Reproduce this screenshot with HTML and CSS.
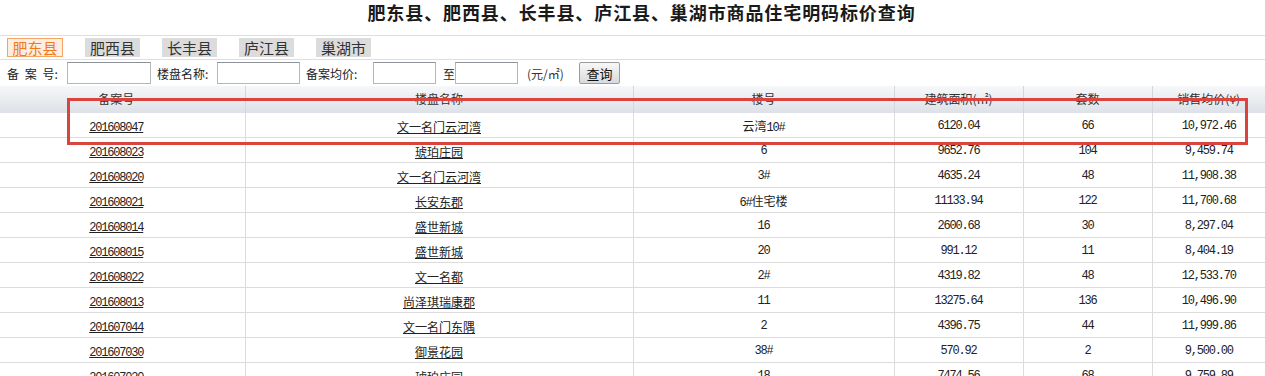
FILE: index.html
```html
<!DOCTYPE html>
<html>
  <head>
    <meta charset="UTF-8"/>
    <title>商品住宅明码标价查询</title>
    <link rel="stylesheet" href="styles.css">
  </head>
  <body>
    <div class="page">
      <h1 class="title">肥东县、肥西县、长丰县、庐江县、巢湖市商品住宅明码标价查询</h1>

      <div class="tabs">
        <a class="tab active">肥东县</a>
        <a class="tab">肥西县</a>
        <a class="tab">长丰县</a>
        <a class="tab">庐江县</a>
        <a class="tab">巢湖市</a>
      </div>

      <div class="filter">
        <span class="label l-no">备 案 号:</span>
        <input class="field f-no" type="text">
        <span class="label l-name">楼盘名称:</span>
        <input class="field f-name" type="text">
        <span class="label l-price">备案均价:</span>
        <input class="field f-price" type="text">
        <span class="label l-to">至</span>
        <input class="field f-price" type="text">
        <span class="label l-unit">(元/㎡)</span>
        <button class="btn" type="button">查询</button>
      </div>

      <table class="list">
        <colgroup>
          <col style="width: 245px">
          <col style="width: 388px">
          <col style="width: 261px">
          <col style="width: 129px">
          <col style="width: 129px">
          <col>
        </colgroup>
        <thead>
          <tr>
            <th class="first">备案号</th>
            <th>楼盘名称</th>
            <th>楼号</th>
            <th>建筑面积(㎡)</th>
            <th>套数</th>
            <th>销售均价(¥)</th>
          </tr>
        </thead>
        <tbody>
          <tr><td class="first"><a class="num">201608047</a></td><td><a>文一名门云河湾</a></td><td>云湾<span class="num">10#</span></td><td class="num">6120.04</td><td class="num">66</td><td class="num">10,972.46</td></tr>
          <tr><td class="first"><a class="num">201608023</a></td><td><a>琥珀庄园</a></td><td class="num">6</td><td class="num">9652.76</td><td class="num">104</td><td class="num">9,459.74</td></tr>
          <tr><td class="first"><a class="num">201608020</a></td><td><a>文一名门云河湾</a></td><td class="num">3#</td><td class="num">4635.24</td><td class="num">48</td><td class="num">11,908.38</td></tr>
          <tr><td class="first"><a class="num">201608021</a></td><td><a>长安东郡</a></td><td><span class="num">6#</span>住宅楼</td><td class="num">11133.94</td><td class="num">122</td><td class="num">11,700.68</td></tr>
          <tr><td class="first"><a class="num">201608014</a></td><td><a>盛世新城</a></td><td class="num">16</td><td class="num">2600.68</td><td class="num">30</td><td class="num">8,297.04</td></tr>
          <tr><td class="first"><a class="num">201608015</a></td><td><a>盛世新城</a></td><td class="num">20</td><td class="num">991.12</td><td class="num">11</td><td class="num">8,404.19</td></tr>
          <tr><td class="first"><a class="num">201608022</a></td><td><a>文一名都</a></td><td class="num">2#</td><td class="num">4319.82</td><td class="num">48</td><td class="num">12,533.70</td></tr>
          <tr><td class="first"><a class="num">201608013</a></td><td><a>尚泽琪瑞康郡</a></td><td class="num">11</td><td class="num">13275.64</td><td class="num">136</td><td class="num">10,496.90</td></tr>
          <tr><td class="first"><a class="num">201607044</a></td><td><a>文一名门东隅</a></td><td class="num">2</td><td class="num">4396.75</td><td class="num">44</td><td class="num">11,999.86</td></tr>
          <tr><td class="first"><a class="num">201607030</a></td><td><a>御景花园</a></td><td class="num">38#</td><td class="num">570.92</td><td class="num">2</td><td class="num">9,500.00</td></tr>
          <tr><td class="first"><a class="num">201607020</a></td><td><a>琥珀庄园</a></td><td class="num">18</td><td class="num">7474.56</td><td class="num">68</td><td class="num">9,759.89</td></tr>
        </tbody>
      </table>

      <div class="mark"></div>
    </div>
  </body>
</html>
```

FILE: styles.css
```css
html, body {
  margin: 0;
  padding: 0;
  overflow: hidden;
  background: #fff;
}
body {
  font-family: 'Noto Sans CJK SC', 'Liberation Sans', sans-serif;
  font-size: 12px;
  color: #222;
}

.page {
  position: relative;
}

.title {
  margin: 0;
  height: 35px;
  line-height: 24px;
  font-size: 18px;
  font-weight: bold;
  letter-spacing: 0.9px;
  text-align: center;
  color: #1a1a1a;
  padding-left: 18px;
  border-bottom: 1px solid #dedede;
}

.tabs {
  display: flex;
  gap: 22px;
  height: 24px;
  padding: 2px 0 0 7px;
  box-sizing: border-box;
  border-bottom: 1px solid #dedede;
}
.tab {
  display: block;
  width: 55px;
  height: 19px;
  line-height: 19px;
  font-size: 15px;
  text-align: center;
  color: #333;
  background: #dcdcdc;
  box-sizing: border-box;
}
.tab.active {
  width: 56px;
  color: #f07a1c;
  background: #fdeedf;
  border: 1px solid #f2a566;
  line-height: 17px;
}

.filter {
  display: flex;
  align-items: center;
  height: 26px;
  padding-left: 7px;
}
.label {
  display: block;
  white-space: nowrap;
}
.l-no { width: 60px; word-spacing: 3px; }
.l-name { width: 60px; margin-left: 6px; }
.l-price { width: 67px; margin-left: 6px; }
.l-to { width: 12px; margin-left: 7px; }
.l-unit { width: 52px; margin-left: 9px; color: #333; }

.field {
  display: block;
  height: 22px;
  margin: 0;
  padding: 0 2px;
  box-sizing: border-box;
  border: 1px solid #b4b8bd;
  border-top-color: #8d9299;
  background: #fff;
}
.f-no { width: 84px; }
.f-name { width: 83px; }
.f-price { width: 63px; }

.btn {
  width: 41px;
  height: 22px;
  margin: 0;
  padding: 0;
  font-family: inherit;
  font-size: 13px;
  color: #111;
  border: 1px solid #9b9b9b;
  border-radius: 2px;
  background: linear-gradient(#f8f8f8, #dadada);
}

.list {
  width: 100%;
  table-layout: fixed;
  border-collapse: collapse;
}
.list th {
  height: 25px;
  padding: 0 0 2px;
  font-weight: normal;
  color: #333;
  background: linear-gradient(#f6f7f9, #dde1e7);
  border-left: 1px solid #d3d7dc;
  text-align: center;
}
.list td {
  height: 22px;
  padding: 2px 0 0;
  text-align: center;
  border-left: 1px solid #dcdcdc;
  border-bottom: 1px solid #dcdcdc;
  white-space: nowrap;
}
.list th.first,
.list td.first {
  border-left: none;
  padding-right: 12px;
}
.list a {
  color: #222;
  text-decoration: underline;
}

.num {
  font-family: 'Liberation Mono', monospace;
  letter-spacing: -1.2px;
}

.mark {
  position: absolute;
  left: 67px;
  top: 98px;
  width: 1181px;
  height: 47px;
  box-sizing: border-box;
  border: 3px solid #d8453f;
}
```
